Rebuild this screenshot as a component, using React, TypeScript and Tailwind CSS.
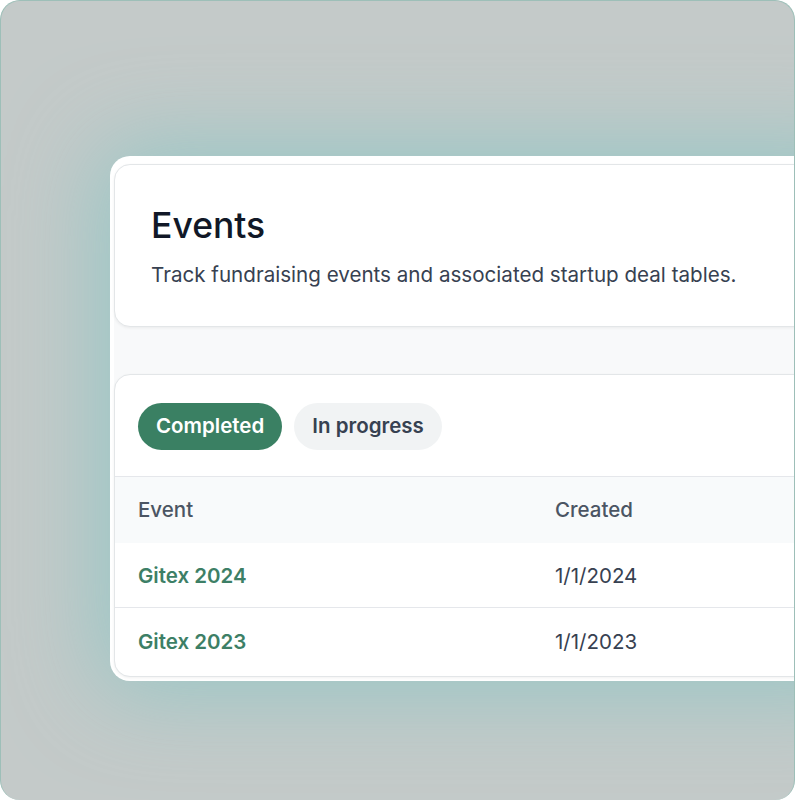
import React from "react";

export default function App() {
  return (
    <div className="w-[795px] h-[800px] bg-white" style={{ fontFamily: "Inter, 'Noto Sans', sans-serif" }}>
      <div className="w-[795px] h-[800px] rounded-[20px] border border-b-0 border-[#9dbfb8] bg-[#c4cac9] overflow-hidden pl-[109px] pt-[155px]">
        <div className="w-[760px] h-[525px] rounded-[20px] bg-white p-[4px] pt-[8px] shadow-[0_0_90px_12px_rgba(140,198,196,0.8)] flex">
          <div className="flex-1 flex flex-col gap-[47px] bg-[#f8f9fa] rounded-[16px]">
            <div className="h-[163px] bg-white border border-[#e3e6e8] rounded-[16px] shadow-[0_1px_3px_rgba(0,0,0,0.06)] px-[36px] pt-[39px]">
              <h1 className="text-[35.5px] leading-[44px] font-medium text-[#111827]">Events</h1>
              <p className="mt-[12px] text-[20.6px] leading-[30px] text-[#374151]">
                Track fundraising events and associated startup deal tables.
              </p>
            </div>
            <div className="h-[303px] bg-white border border-[#e3e6e8] rounded-[16px] shadow-[0_1px_3px_rgba(0,0,0,0.06)] flex flex-col overflow-hidden">
              <div className="h-[102px] flex items-center gap-[12px] px-[23px] pt-[1px] border-b border-[#e5e7eb]">
                <span className="h-[47px] px-[18px] rounded-full bg-[#3a8063] text-white text-[20.5px] font-semibold flex items-center">Completed</span>
                <span className="h-[47px] px-[18px] rounded-full bg-[#f1f3f4] text-[#374151] text-[20.5px] font-semibold flex items-center">In progress</span>
              </div>
              <div className="h-[66px] bg-[#f8fafb] flex items-center text-[20.5px] font-medium text-[#4b5563] whitespace-nowrap">
                <div className="w-[417px] shrink-0 px-[23px]">Event</div>
                <div className="w-[238px] shrink-0 px-[23px]">Created</div>
                <div className="shrink-0 px-[23px]">Deals</div>
              </div>
              <div className="h-[65px] flex items-center text-[20.5px] pt-[2px] border-b border-[#e5e7eb]">
                <div className="w-[417px] shrink-0 px-[23px] font-semibold text-[#3d7f66]">Gitex 2024</div>
                <div className="w-[238px] shrink-0 px-[23px] text-[#374151]">1/1/2024</div>
              </div>
              <div className="h-[66px] flex items-center text-[20.5px] pt-[2px]">
                <div className="w-[417px] shrink-0 px-[23px] font-semibold text-[#3d7f66]">Gitex 2023</div>
                <div className="w-[238px] shrink-0 px-[23px] text-[#374151]">1/1/2023</div>
              </div>
            </div>
          </div>
        </div>
      </div>
    </div>
  );
}
